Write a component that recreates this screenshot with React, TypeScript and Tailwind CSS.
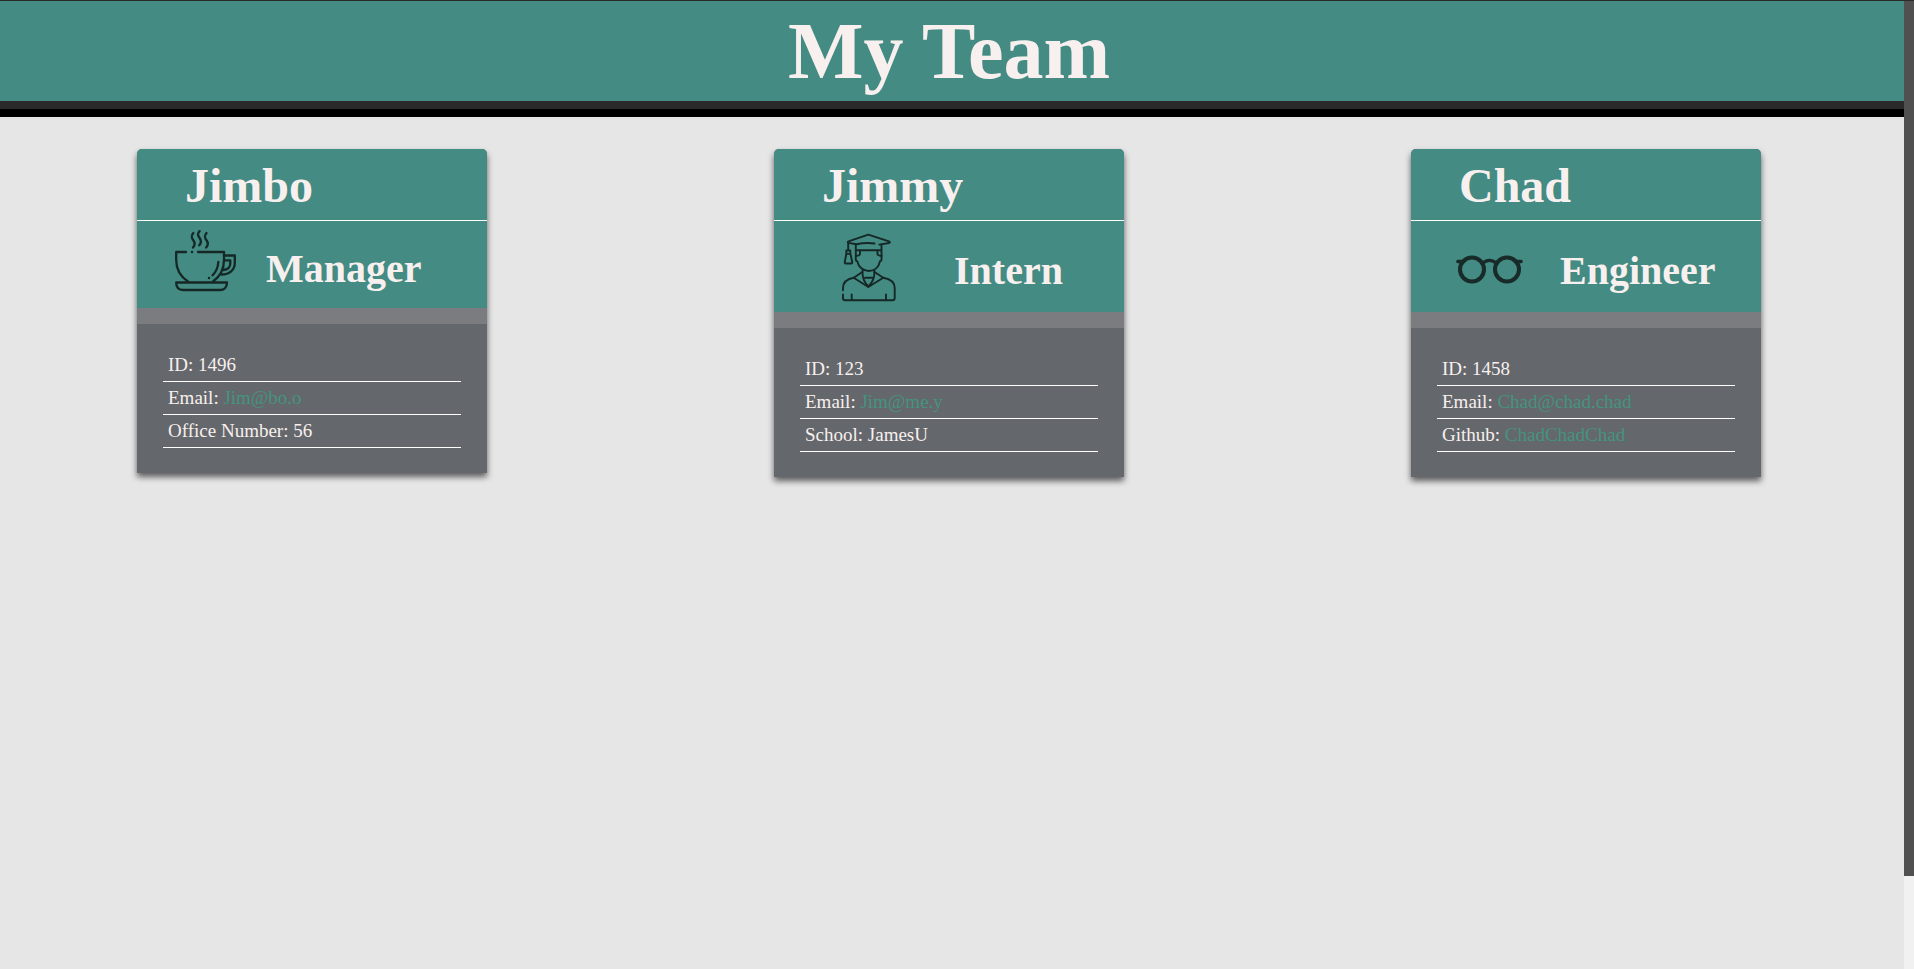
import type { ReactNode } from 'react';

type Row = { label: string; value: string; href?: string };
type Member = {
  name: string;
  role: string;
  spacing: string;
  icon: ReactNode;
  rows: Row[];
};

function CupIcon() {
  return (
    <svg width="61" height="69" viewBox="0 0 61 69" className="shrink-0" fill="none" stroke="#152826" strokeWidth="2.300" strokeLinecap="round" strokeLinejoin="round" aria-hidden="true">
      <path d="M18.3 3c-2.6 3-1.8 4.8 0 7.2s1.800 4.800-.3 7.300M24.600 1c-2.600 3-1.800 4.600 0 7s1.800 4.800-.3 7.300M31.500 3c-2.600 3-1.800 4.800 0 7.200s1.800 4.800-.3 7.300" />
      <path d="M11 22H1.200v8c0 9.500 4.800 17 11.800 21.500M23 22h26v8c0 9-4 16.500-11 21.500" />
      <path d="M17 22h.01M34 48h.01" strokeWidth="2.500" />
      <path d="M49 25.500h10.800v7.500c0 7-5.300 11.500-13.300 11.500" />
      <path d="M49.500 30.300h5.800v3c0 4-2.800 6.400-7.300 6.700" />
      <path d="M43.300 32c-.3 5.500-2.300 10-5.800 13.300" />
      <path d="M1.200 52.500h50.800c0 5-3 7.500-7 7.500H8c-4 0-6.800-2.500-6.800-7.500z" />
    </svg>
  );
}

function GraduateIcon() {
  return (
    <svg width="67" height="73" viewBox="0 0 67 73" className="shrink-0" fill="none" stroke="#152826" strokeWidth="1.900" strokeLinecap="round" strokeLinejoin="round" aria-hidden="true">
      <path d="M39.500 13.500c-6-.9-12-.5-18 .8l-8-1.400c-1-.3-1-1.100 0-1.500L33.300 4.700 54 11.400c1.200.4 1.200 1.300 0 1.600l-9.700 1.600" />
      <path d="M20.800 14.500V30c0 .8.500 1.200 1.500 1.200C23.500 37 28 41 33.800 41s10-4 11.200-9.800c1 0 1.500-.4 1.500-1.200V14.500M20.800 20.300H46.500" />
      <path d="M25 20.700v3.200c0 1.200-1.500 1.800-4.200 2M42.500 20.700v3.200c0 1.200 1.500 1.800 4.200 2" />
      <path d="M13.200 13v7.300M11.300 20.500h4v3.400h-4zM11.300 24l-1.600 8.500c0 .8.300 1 1 1h5.600c.7 0 1-.2 1-1L15.500 24" />
      <path d="M27.600 40v4c0 5 2.500 9 5.700 12.500C36.800 53 39.300 49 39.300 44v-4M30 47.700h7.300" />
      <path d="M27.300 42l-8.600 5.700L33.300 57l15-9.300-8.800-5.700" />
      <path d="M18.700 47.700C11.500 49 8 52 8 58v2.300M8 64.500V68c0 1.500.8 2.300 2.200 2.300h47c1.600 0 2.500-.8 2.500-2.300V58c0-6-4-9-11.400-10.300M16.700 64.500v5.500M51 64.500v5.500" />
    </svg>
  );
}

function GlassesIcon() {
  return (
    <svg width="67" height="73" viewBox="0 0 67 73" className="shrink-0" fill="none" stroke="#182b29" strokeLinecap="round" aria-hidden="true">
      <circle cx="16" cy="39.500" r="12" strokeWidth="4" />
      <circle cx="51" cy="39.500" r="12" strokeWidth="4" />
      <path d="M26.500 33.500c4-4.300 10-4.300 14 0M1.800 31.500H8M59 31.500h6.200" strokeWidth="3.300" />
    </svg>
  );
}

const team: Member[] = [
  {
    name: 'Jimbo',
    role: 'Manager',
    spacing: 'pl-[38px] gap-[30px]',
    icon: <CupIcon />,
    rows: [
      { label: 'ID', value: '1496' },
      { label: 'Email', value: 'Jim@bo.o', href: 'mailto:Jim@bo.o' },
      { label: 'Office Number', value: '56' },
    ],
  },
  {
    name: 'Jimmy',
    role: 'Intern',
    spacing: 'pl-[61px] gap-[52px]',
    icon: <GraduateIcon />,
    rows: [
      { label: 'ID', value: '123' },
      { label: 'Email', value: 'Jim@me.y', href: 'mailto:Jim@me.y' },
      { label: 'School', value: 'JamesU' },
    ],
  },
  {
    name: 'Chad',
    role: 'Engineer',
    spacing: 'pl-[45px] gap-[37px]',
    icon: <GlassesIcon />,
    rows: [
      { label: 'ID', value: '1458' },
      { label: 'Email', value: 'Chad@chad.chad', href: 'mailto:Chad@chad.chad' },
      { label: 'Github', value: 'ChadChadChad', href: 'https://github.com/ChadChadChad' },
    ],
  },
];

function Card({ member }: { member: Member }) {
  return (
    <article className="w-[350px] rounded-t-[5px] bg-[#64676c] shadow-[0_4px_6px_rgba(0,0,0,0.6)]">
      <header className="rounded-t-[5px] bg-[#438b83] text-[#f8f0ee]">
        <h2 className="border-b border-white px-12 pt-[9px] pb-[7px] text-[48px] leading-[55px] font-bold">{member.name}</h2>
        <div className={`flex items-center py-[9px] ${member.spacing}`}>
          {member.icon}
          <h3 className="mt-[9px] text-[40px] leading-[46px] font-bold">{member.role}</h3>
        </div>
      </header>
      <div className="h-4 bg-[#7a7c80]" />
      <ul className="px-[26px] py-[25px] text-[19px] leading-8 text-[#f8f0ee]">
        {member.rows.map((row) => (
          <li key={row.label} className="border-b border-white pl-[5px]">
            {row.label}:{' '}
            {row.href ? (
              <a href={row.href} className="text-[#459480]">{row.value}</a>
            ) : (
              row.value
            )}
          </li>
        ))}
      </ul>
    </article>
  );
}

export default function App() {
  return (
    <div className="flex min-h-screen flex-col bg-[#e6e6e6] font-['Liberation_Serif','Times_New_Roman',serif]">
      <div className="h-px bg-[#2a2a2a]" />
      <div className="flex flex-1">
        <div className="flex-1">
          <header className="border-b-8 border-black">
            <h1 className="border-b-8 border-[#2a2a2a] bg-[#438b83] py-1 pr-[6px] text-center text-[80px] leading-[92px] font-bold text-[#f8f0ee]">
              My Team
            </h1>
          </header>
          <main className="flex items-start justify-between pt-8 pr-[143px] pl-[137px]">
            {team.map((member) => (
              <Card key={member.name} member={member} />
            ))}
          </main>
        </div>
        <div className="flex w-[10px] flex-col bg-[#f1f1f1]">
          <div className="basis-[90.4%] bg-[#505050]" />
        </div>
      </div>
    </div>
  );
}
